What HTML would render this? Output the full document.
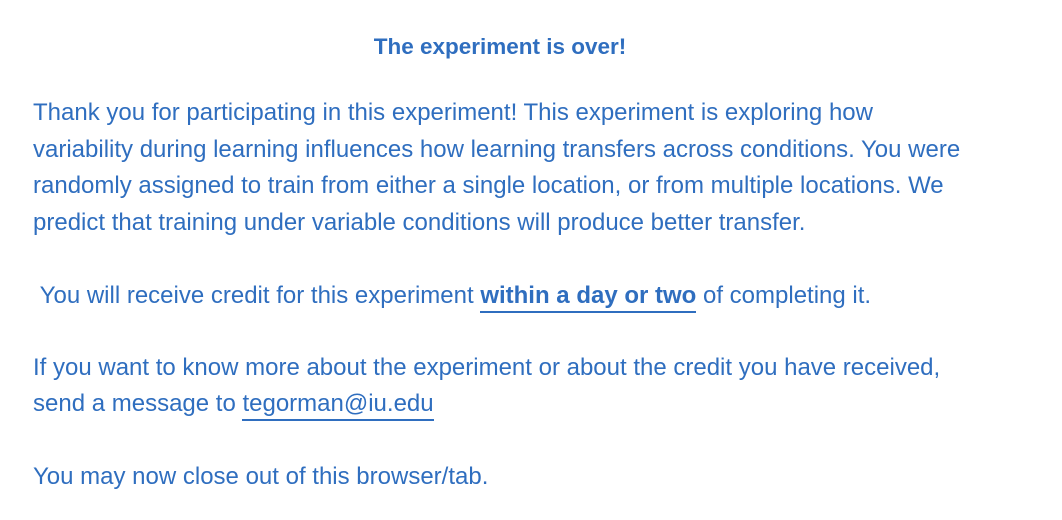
<!DOCTYPE html>
<html><head><meta charset="utf-8"><style>
html,body{margin:0;padding:0;background:#fff;width:1062px;height:520px;overflow:hidden}
.l{position:absolute;left:33px;white-space:nowrap;font-family:"Liberation Sans",sans-serif;font-size:24px;line-height:28px;color:#2f6ebf;letter-spacing:0}
.u{border-bottom:2px solid #2f6ebf;padding-bottom:2px}
</style></head><body>
<div class="l" style="left:0;width:1000px;text-align:center;top:35px;font-weight:bold;font-size:22.5px;line-height:24px">The experiment is over!</div>
<div class="l" style="top:99px">Thank you for participating in this experiment! This experiment is exploring how</div>
<div class="l" style="top:136px">variability during learning influences how learning transfers across conditions. You were</div>
<div class="l" style="top:172px">randomly assigned to train from either a single location, or from multiple locations. We</div>
<div class="l" style="top:209px">predict that training under variable conditions will produce better transfer.</div>
<div class="l" style="top:282px">&nbsp;You will receive credit for this experiment <b class="u">within a day or two</b> of completing it.</div>
<div class="l" style="top:354px">If you want to know more about the experiment or about the credit you have received,</div>
<div class="l" style="top:390px">send a message to <span class="u">tegorman@iu.edu</span></div>
<div class="l" style="top:463px">You may now close out of this browser/tab.</div>
</body></html>
